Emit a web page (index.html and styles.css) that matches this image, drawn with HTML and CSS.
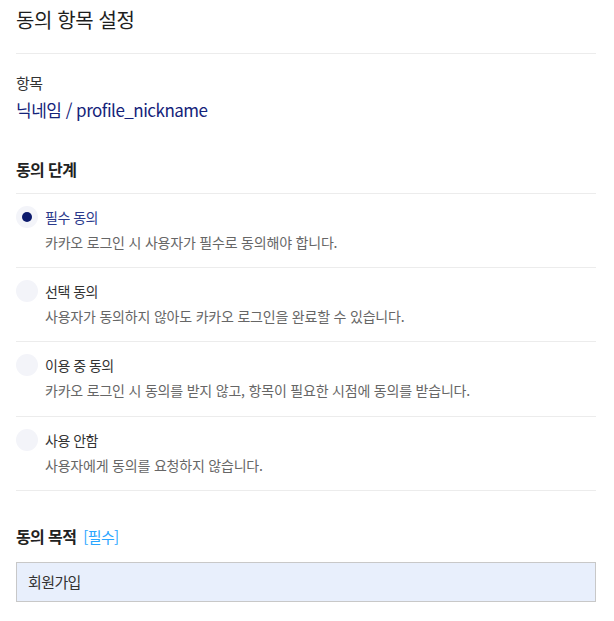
FILE: index.html
```html
<!DOCTYPE html>
<html lang="ko">
<head>
<meta charset="utf-8">
<link rel="stylesheet" href="styles.css">
</head>
<body>
<div class="page">
  <div class="header"><h1 class="title">동의 항목 설정</h1></div>
  <div class="item">
    <div class="item-label">항목</div>
    <div class="item-value">닉네임 / profile_nickname</div>
  </div>
  <h2 class="section-title with-border">동의 단계</h2>
  <ul class="options">
    <li class="option">
      <span class="radio checked"><span class="dot"></span></span>
      <div class="option-text">
        <div class="option-label selected">필수 동의</div>
        <div class="option-desc">카카오 로그인 시 사용자가 필수로 동의해야 합니다.</div>
      </div>
    </li>
    <li class="option">
      <span class="radio"></span>
      <div class="option-text">
        <div class="option-label">선택 동의</div>
        <div class="option-desc">사용자가 동의하지 않아도 카카오 로그인을 완료할 수 있습니다.</div>
      </div>
    </li>
    <li class="option">
      <span class="radio"></span>
      <div class="option-text">
        <div class="option-label">이용 중 동의</div>
        <div class="option-desc">카카오 로그인 시 동의를 받지 않고, 항목이 필요한 시점에 동의를 받습니다.</div>
      </div>
    </li>
    <li class="option">
      <span class="radio"></span>
      <div class="option-text">
        <div class="option-label">사용 안함</div>
        <div class="option-desc">사용자에게 동의를 요청하지 않습니다.</div>
      </div>
    </li>
  </ul>
  <h2 class="section-title purpose">동의 목적 <span class="required">[필수]</span></h2>
  <div class="input">회원가입</div>
</div>
</body>
</html>
```

FILE: styles.css
```css
* { box-sizing: border-box; }
html, body { margin: 0; padding: 0; background: #fff; }
body {
  font-family: "Noto Sans CJK KR", "Noto Sans", sans-serif;
  color: #333;
}
.page { padding: 0 18px 0 16px; }
.header {
  height: 54px;
  border-bottom: 1px solid #ececec;
}
.title {
  margin: 0;
  font-size: 20px;
  font-weight: 400;
  letter-spacing: -0.4px;
  line-height: 40px;
  color: #1e1e1e;
}
.item { padding-top: 18px; }
.item-label {
  font-size: 15px;
  line-height: 22px;
  letter-spacing: -0.6px;
  color: #333;
}
.item-value {
  margin-top: 4px;
  font-size: 17px;
  line-height: 24px;
  letter-spacing: -0.5px;
  color: #14237a;
}
.section-title {
  margin: 35px 0 0;
  font-size: 16px;
  font-weight: 700;
  line-height: 24px;
  letter-spacing: -0.6px;
  color: #222;
}
.with-border {
  padding-bottom: 12px;
  border-bottom: 1px solid #ececec;
}
.options { list-style: none; margin: 0; padding: 0; }
.option {
  display: flex;
  align-items: flex-start;
  padding: 12px 0 14px;
  border-bottom: 1px solid #ececec;
}
.option:nth-child(3) { padding-bottom: 15px; }
.radio {
  flex: none;
  width: 22px;
  height: 22px;
  margin-right: 7px;
  border-radius: 50%;
  background: #f3f4f9;
  display: flex;
  align-items: center;
  justify-content: center;
}
.dot {
  width: 10px;
  height: 10px;
  border-radius: 50%;
  background: #0c1a6c;
}
.option-label {
  font-size: 14px;
  line-height: 22px;
  letter-spacing: -0.5px;
  color: #333;
}
.option-label.selected { color: #2b3a8c; }
.option-desc {
  margin-top: 3px;
  font-size: 14px;
  line-height: 22px;
  letter-spacing: -0.2px;
  color: #666;
}
.purpose { margin-top: 33px; }
.required {
  margin-left: 3px;
  font-weight: 400;
  font-size: 15px;
  color: #2aa6ff;
}
.input {
  margin-top: 13px;
  height: 40px;
  border: 1px solid #c8c8c8;
  background: #e8effc;
  padding: 0 11px;
  font-size: 15px;
  line-height: 38px;
  letter-spacing: -0.6px;
  color: #333;
}
```
